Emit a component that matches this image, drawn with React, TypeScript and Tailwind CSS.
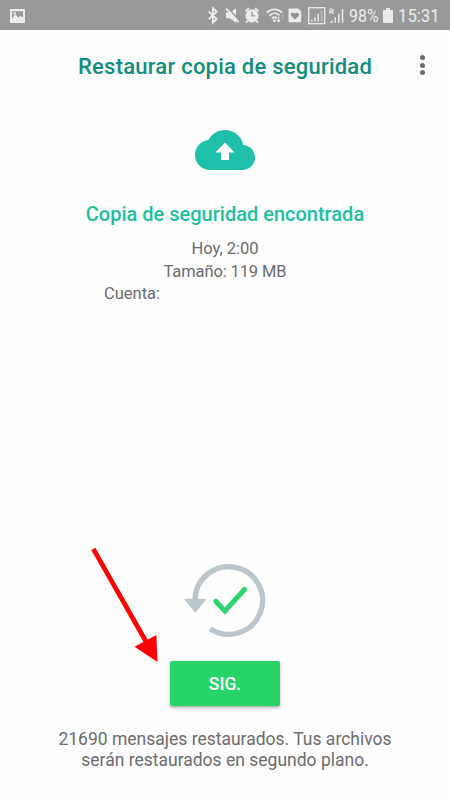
import React from "react";

function StatusIcons() {
  return (
    <svg className="block h-[30px] w-[141px]" viewBox="205 0 141 30" fill="none" stroke="#ececec">
      {/* bluetooth */}
      <path d="M208.7 11.7l8 7.3-3.8 3.6V8.2l3.8 3.6-8 7.3" strokeWidth="1.8" />
      {/* muted speaker */}
      <path d="M226 12.6h4l6-4.4v14.6l-6-4.5h-4z" fill="#ececec" stroke="none" />
      <path d="M227.400 7.400l12.600 13.600" stroke="#999" strokeWidth="1.600" />
      <path d="M226.200 8.600l12.400 13.600" strokeWidth="2" />
      {/* alarm */}
      <circle cx="252" cy="15.8" r="6.6" fill="#ececec" stroke="none" />
      <path d="M245.4 11.2l3.6-2.9M258.6 11.2l-3.6-2.9M247.6 20.8l-1.6 1.8M256.4 20.8l1.6 1.8" strokeWidth="1.8" />
      <path d="M252 11.6v4.3h3.3" stroke="#999" strokeWidth="1.4" />
      {/* wifi */}
      <path d="M266.800 12.600c4.600-4.400 11-4.400 15.400 0M269.300 15.600c3.200-3 7.300-3 10.200-.2M271.800 18.400c1.800-1.500 3.600-1.500 5.200 0" strokeWidth="1.700" />
      <circle cx="274.400" cy="20.800" r="1.400" fill="#ececec" stroke="none" />
      <path d="M278.600 16.400v5.200M277 20l1.600 1.800 1.600-1.800" strokeWidth="1.100" />
      <path d="M282.600 19v-4M281.400 16.400l1.200-1.400 1.200 1.400" stroke="#b4b4b4" strokeWidth="1" />
      {/* card with heart */}
      <path d="M289.500 8.500h8.700l3 3v10.800h-11.700q-1 0-1-1V9.500q0-1 1-1z" fill="#ececec" stroke="none" />
      <path d="M294.900 19.500l-3.600-3.500c-1.700-2.200 1.500-4.600 3.600-2.300 2.100-2.300 5.300.1 3.600 2.300z" fill="#929292" stroke="none" />
      {/* SIM 1 signal */}
      <rect x="308.700" y="7.700" width="16" height="16" strokeWidth="1.300" />
      <path d="M311.900 21.800v-2M315 21.800v-4.500M318.200 21.800v-8" strokeWidth="1.500" />
      <path d="M321.600 21.800v-11.500" stroke="#bdbdbd" strokeWidth="1.500" />
      {/* roaming signal */}
      <path d="M330 14V9h1.800q1.600 0 1.600 1.300t-1.600 1.300H330M331.700 11.700l1.700 2.300" strokeWidth="1.100" />
      <path d="M329.500 22.700l3-3v3z" fill="#ececec" stroke="none" />
      <path d="M335.200 22.700v-5.500M338.800 22.700v-9M342.500 22.700V9" strokeWidth="1.500" />
    </svg>
  );
}

function StatusBar() {
  return (
    <header className="flex h-[30px] items-center bg-[#999999] text-[#ececec]">
      <svg className="ml-[10px] mt-px h-[14px] w-[15px]" viewBox="0 0 15 14">
        <rect width="15" height="14" rx="1" fill="#ececec" />
        <path d="M2 2.200h11v6.500l-2.500-2-2.200 2-2.800-3.400L2 9.600z" fill="#999" />
        <circle cx="4.700" cy="4.300" r="1.200" fill="#ececec" />
      </svg>
      <div className="ml-[180px]">
        <StatusIcons />
      </div>
      <span className="ml-[3px] w-[31px] origin-left scale-x-[.86] whitespace-nowrap pt-[2px] text-[18.500px] leading-[28px]">98%</span>
      <svg className="ml-[3px] mt-px h-[15px] w-[10px]" viewBox="0 0 10 15">
        <path d="M3 0h4v2h2q1 0 1 1v11q0 1-1 1H1q-1 0-1-1V3q0-1 1-1h2z" fill="#ececec" />
      </svg>
      <span className="ml-[5px] origin-left scale-x-[.88] whitespace-nowrap pt-[2px] text-[19px] leading-[28px]">15:31</span>
    </header>
  );
}

export default function App() {
  return (
    <div className="relative flex h-[800px] w-[450px] flex-col overflow-hidden bg-[#fefefe] font-[Roboto,sans-serif] text-[#6b6b6b]">
      <StatusBar />
      <div className="flex h-[72px] items-center">
        <h1 className="ml-[78px] w-[294px] whitespace-nowrap text-[22px] font-medium tracking-[.23px] text-[#128c7e]">Restaurar copia de seguridad</h1>
        <button className="mb-[2px] ml-[44px] flex h-5 w-3 flex-col items-center justify-between" aria-label="Más opciones">
          <i className="size-[5px] rounded-full bg-[#6d6d6d]" />
          <i className="size-[5px] rounded-full bg-[#6d6d6d]" />
          <i className="size-[5px] rounded-full bg-[#6d6d6d]" />
        </button>
      </div>
      <main className="flex flex-1 flex-col items-center pt-7">
        <svg className="h-10 w-[60px]" viewBox="0 4 24 16">
          <path d="M19.350 10.040C18.670 6.590 15.640 4 12 4 9.110 4 6.600 5.640 5.350 8.040 2.340 8.360 0 10.910 0 14c0 3.310 2.690 6 6 6h13c2.760 0 5-2.240 5-5 0-2.640-2.050-4.780-4.650-4.960z" fill="#20bfa9" />
          <path d="M12 9l3.850 4h-2.250v3h-3.200v-3H8.150z" fill="#fff" />
        </svg>
        <h2 className="mt-[31px] whitespace-nowrap text-[20px] leading-[26px] font-medium text-[#20bfa0]">Copia de seguridad encontrada</h2>
        <div className="mt-[11px] w-[242px] text-center text-[16.500px] leading-[22.500px]">
          <p>Hoy, 2:00</p>
          <p className="tracking-[-.12px]">Tamaño: 119 MB</p>
          <p className="text-left">Cuenta:</p>
        </div>
        <div className="mt-auto flex flex-col items-center pb-[29px]">
          <svg className="h-[76px] w-[84px]" viewBox="183 563 84 76" fill="none">
            <path d="M195 600.500A33.800 33.800 0 1 1 210.200 628.700" stroke="#bac5cc" strokeWidth="5.300" />
            <path d="M184.800 599.300h20.900l-10.400 13z" fill="#bac5cc" stroke="#bac5cc" strokeLinejoin="round" />
            <path d="M215.800 601.300l9.100 9.800 19.700-21.800" stroke="#2dd36e" strokeWidth="5" strokeLinecap="round" />
          </svg>
          <button className="mt-[22px] h-[45px] w-[110px] rounded-[2px] bg-[#27d467] pt-[2px] text-[17.500px] font-medium text-white shadow-[0_2px_3px_rgba(0,0,0,.3)]">SIG.</button>
          <p className="mt-[23px] text-center text-[17.500px] leading-[21px] whitespace-nowrap">
            21690 mensajes restaurados. Tus archivos<br />serán restaurados en segundo plano.
          </p>
        </div>
      </main>
      <svg className="absolute top-[540px] left-[85px] h-[130px] w-[80px]" viewBox="85 540 80 130">
        <path d="M93.300 548.800L146 641.500" stroke="#f00" strokeWidth="4.700" />
        <path d="M134.500 646.800L156.400 635 157.500 662z" fill="#f00" />
      </svg>
    </div>
  );
}
